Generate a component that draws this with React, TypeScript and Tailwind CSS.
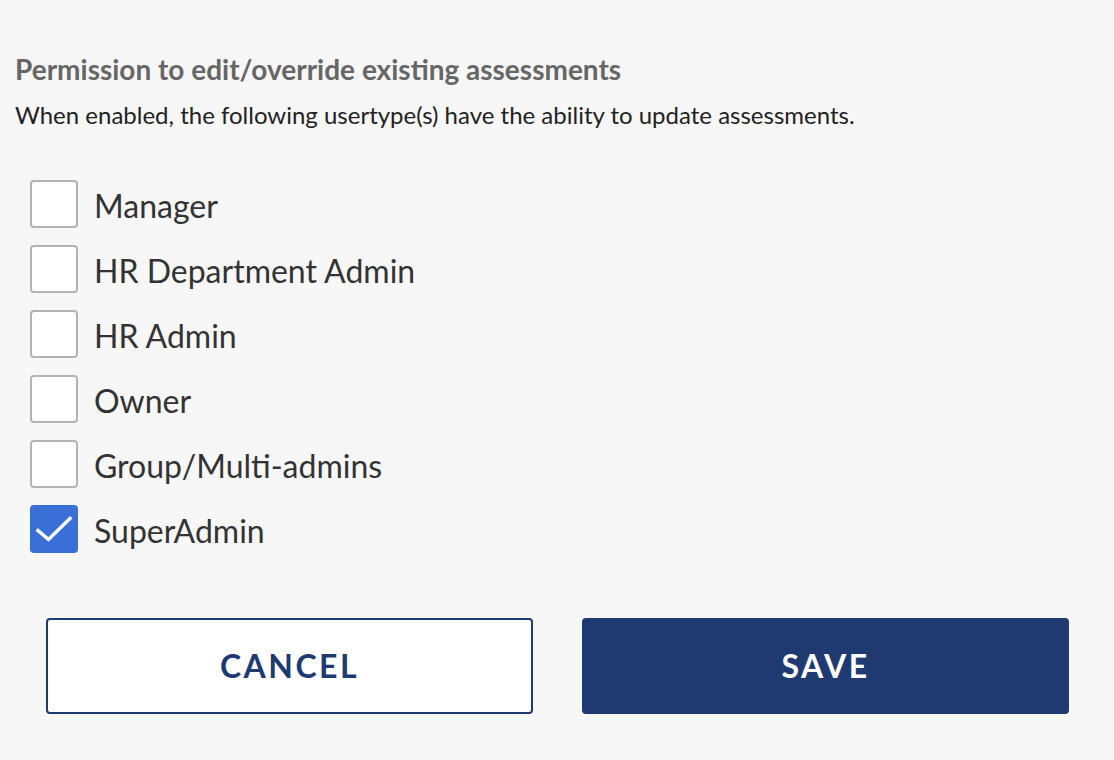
import React from "react";

const userTypes = [
  { id: "manager", label: "Manager", checked: false },
  { id: "hr-dept", label: "HR Department Admin", checked: false },
  { id: "hr-admin", label: "HR Admin", checked: false },
  { id: "owner", label: "Owner", checked: false },
  { id: "group", label: "Group/Multi-admins", checked: false },
  { id: "super", label: "SuperAdmin", checked: true },
];

export default function App() {
  return (
    <div
      className="w-[1114px] h-[760px] bg-[#f7f7f7] overflow-hidden"
      style={{ fontFamily: "Lato, 'Open Sans', sans-serif" }}
    >
      <div className="pt-[52px] pl-[15px]">
        <h2 className="text-[28px] font-bold text-[#666666] leading-[34px]">
          Permission to edit/override existing assessments
        </h2>
        <p className="mt-[13px] text-[24px] text-[#222222] leading-[32px]">
          When enabled, the following usertype(s) have the ability to update assessments.
        </p>
      </div>

      <div className="mt-[49px] pl-[30px] flex flex-col gap-[17px]">
        {userTypes.map((u) => (
          <label key={u.id} className="flex items-center gap-[16px] h-[48px]">
            {u.checked ? (
              <span className="w-[48px] h-[48px] rounded-[4px] bg-[#3a6fd8] shrink-0">
                <svg width="48" height="48" viewBox="0 0 48 48" fill="none">
                  <path
                    d="M8 25.5 L18.5 34.5 L40 13.5"
                    stroke="white"
                    strokeWidth="3.5"
                    strokeLinecap="square"
                  />
                </svg>
              </span>
            ) : (
              <span className="w-[48px] h-[48px] rounded-[4px] bg-white border-2 border-[#b3b3b3] shrink-0" />
            )}
            <span className="pt-[4px] text-[32px] text-[#333333] leading-[40px]">{u.label}</span>
          </label>
        ))}
      </div>

      <div className="mt-[65px] pl-[46px] flex gap-[49px]">
        <button className="w-[487px] h-[96px] bg-white border-2 border-[#1e3a70] rounded-[4px] text-[#1e3a70] text-[32px] font-bold tracking-[2.5px]">
          CANCEL
        </button>
        <button className="w-[487px] h-[96px] bg-[#1e3a70] rounded-[4px] text-white text-[32px] font-bold tracking-[2.5px]">
          SAVE
        </button>
      </div>
    </div>
  );
}
